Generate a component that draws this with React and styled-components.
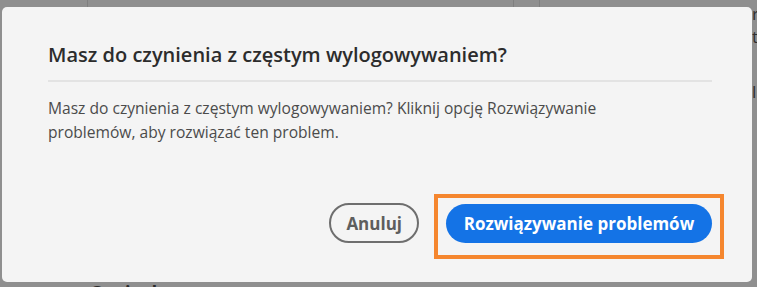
import React from 'react'
import styled, { createGlobalStyle } from 'styled-components'

const GlobalStyle = createGlobalStyle`
  html, body {
    margin: 0;
    padding: 0;
    background: #8f8f8f;
  }
  body {
    font-family: 'Open Sans', 'Noto Sans', sans-serif;
  }
`

const Page = styled.div`
  position: relative;
  width: 757px;
  height: 287px;
  overflow: hidden;
  background: #8f8f8f;
  display: flex;
  flex-direction: column;
`

const TopStrip = styled.div`
  display: grid;
  grid-template-columns: 88px 426px 26px 1fr;
  height: 7px;
  flex-shrink: 0;
`

const StripCell = styled.div`
  border-right: 1px solid #7f7f7f;
  &:last-child {
    border-right: none;
  }
`

const Middle = styled.div`
  flex: 1;
  display: flex;
  justify-content: flex-end;
`

const RightRail = styled.div`
  width: 5px;
  margin-top: -5px;
  overflow: hidden;
  display: flex;
  flex-direction: column;
  font-size: 17px;
  line-height: 23px;
  color: #2e2e2e;
`

const RailGlyph = styled.span`
  margin-top: ${props => props.gap || 0}px;
`

const BottomHeading = styled.div`
  height: 5px;
  overflow: hidden;
  padding-left: 90px;
  font-size: 18px;
  font-weight: 700;
  line-height: 22px;
  color: #2a2a2a;
  white-space: nowrap;
`

const BottomText = styled.span`
  display: block;
  margin-top: -1px;
`

const Dialog = styled.div`
  position: absolute;
  top: 7px;
  left: 2px;
  width: 750px;
  height: 275px;
  box-sizing: border-box;
  background: #f4f4f4;
  border-radius: 5px;
  padding: 34px 40px 39px 46px;
  display: flex;
  flex-direction: column;
`

const Title = styled.h2`
  margin: 0;
  font-size: 20px;
  line-height: 28px;
  font-weight: 600;
  color: #2c2c2c;
  padding-bottom: 11px;
  border-bottom: 2px solid #e3e3e3;
`

const Body = styled.p`
  margin: 14px 0 0;
  font-size: 15.6px;
  line-height: 24px;
  color: #4b4b4b;
  max-width: 620px;
`

const Actions = styled.div`
  margin-top: auto;
  display: flex;
  justify-content: flex-end;
  align-items: center;
  gap: 27px;
`

const SecondaryButton = styled.button`
  height: 40px;
  padding: 0 15px;
  border-radius: 20px;
  border: 2px solid #6e6e6e;
  background: transparent;
  color: #5e5e5e;
  font-family: inherit;
  font-size: 17px;
  font-weight: 700;
`

const Highlight = styled.span`
  position: relative;
  display: inline-flex;

  &::after {
    content: '';
    position: absolute;
    top: -10px;
    left: -12px;
    right: -12px;
    bottom: -16px;
    border: 4px solid #f5862e;
    pointer-events: none;
  }
`

const PrimaryButton = styled.button`
  height: 39px;
  width: 266px;
  border-radius: 20px;
  border: none;
  background: #1473e6;
  color: #ffffff;
  font-family: inherit;
  font-size: 17px;
  font-weight: 700;
`

export default function App() {
  return (
    <>
      <GlobalStyle />
      <Page>
        <TopStrip>
          <StripCell />
          <StripCell />
          <StripCell />
          <StripCell />
        </TopStrip>
        <Middle>
          <RightRail>
            <RailGlyph>r</RailGlyph>
            <RailGlyph>t</RailGlyph>
            <RailGlyph gap={32}>l</RailGlyph>
          </RightRail>
        </Middle>
        <BottomHeading>
          <BottomText>Opcje dostępu</BottomText>
        </BottomHeading>
        <Dialog>
          <Title>Masz do czynienia z częstym wylogowywaniem?</Title>
          <Body>
            Masz do czynienia z częstym wylogowywaniem? Kliknij opcję Rozwiązywanie
            problemów, aby rozwiązać ten problem.
          </Body>
          <Actions>
            <SecondaryButton>Anuluj</SecondaryButton>
            <Highlight>
              <PrimaryButton>Rozwiązywanie problemów</PrimaryButton>
            </Highlight>
          </Actions>
        </Dialog>
      </Page>
    </>
  )
}
